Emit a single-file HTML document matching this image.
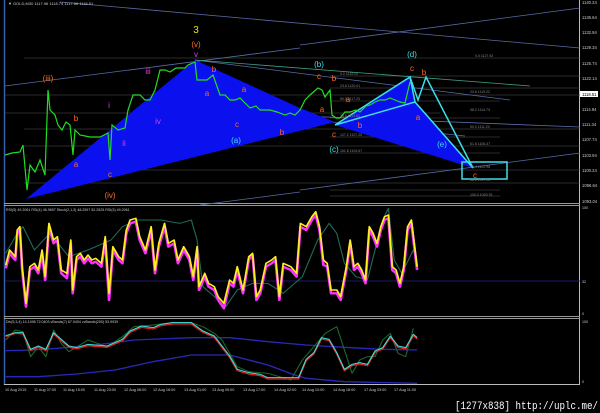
<!DOCTYPE html>
<html><head><meta charset="utf-8"><style>
html,body{margin:0;padding:0;background:#000;width:600px;height:413px;overflow:hidden}
svg{display:block;font-family:"Liberation Sans",sans-serif}
</style></head><body>
<svg width="600" height="413" viewBox="0 0 600 413" xmlns="http://www.w3.org/2000/svg">
<rect width="600" height="413" fill="#000"/>
<line x1="4.5" y1="0" x2="4.5" y2="385" stroke="#3a5fb0" stroke-width="1.5"/>
<line x1="579.5" y1="0" x2="579.5" y2="385" stroke="#bbb" stroke-width="1"/>
<line x1="4" y1="203.5" x2="580" y2="203.5" stroke="#999"/>
<line x1="4" y1="205.5" x2="580" y2="205.5" stroke="#999"/>
<line x1="4" y1="316.5" x2="580" y2="316.5" stroke="#999"/>
<line x1="4" y1="318.5" x2="580" y2="318.5" stroke="#999"/>
<line x1="4" y1="384.5" x2="580" y2="384.5" stroke="#bbb"/>
<g stroke="#555" stroke-width="0.6">
<line x1="24" y1="58" x2="580" y2="58"/>
<line x1="5" y1="95" x2="580" y2="95"/>
<line x1="5" y1="113" x2="440" y2="113"/>
<line x1="24" y1="129" x2="580" y2="129"/>
<line x1="24" y1="146" x2="580" y2="146"/>
<line x1="24" y1="170" x2="580" y2="170"/>
<line x1="24" y1="183" x2="580" y2="183"/>
<line x1="330" y1="76" x2="580" y2="76"/>
<line x1="330" y1="88" x2="580" y2="88"/>
<line x1="330" y1="101" x2="500" y2="101"/>
<line x1="330" y1="118" x2="500" y2="118"/>
<line x1="330" y1="137" x2="500" y2="137"/>
<line x1="330" y1="153" x2="500" y2="153"/>
<line x1="330" y1="190" x2="500" y2="190"/>
<line x1="330" y1="196" x2="500" y2="196"/>
</g>
<g stroke="#5a6aa8" stroke-width="0.8" fill="none">
<line x1="60" y1="2" x2="580" y2="48"/>
<line x1="300" y1="45" x2="580" y2="8"/>
<line x1="5" y1="86" x2="300" y2="48"/>
<line x1="195" y1="60" x2="510" y2="100"/>
<line x1="330" y1="122" x2="465" y2="136"/>
<line x1="300" y1="190" x2="580" y2="153"/>
<line x1="200" y1="205" x2="300" y2="192"/>
<line x1="148" y1="110" x2="580" y2="127"/>
</g>
<line x1="195" y1="60" x2="530" y2="86" stroke="#3f9f8a" stroke-width="0.8"/>
<polygon points="26,199 195,60 300,108 335,122" fill="#0a10ee"/>
<polygon points="300,112 335,122 26,199" fill="#0a10ee"/>
<polygon points="335,125 410,77 415,102 473,168" fill="#0a10ee"/>
<g stroke="#3ee0e8" stroke-width="1.5" fill="none">
<polyline points="335,125 410,77 415,102 335,125"/>
<polyline points="415,102 473,168 426,77 418,100 410,77"/>
<rect x="462" y="162" width="45" height="17"/>
</g>
<polyline fill="none" stroke="#22dd22" stroke-width="1.2" points="5,155 12,153 20,152 23,145 27,190 30,165 35,172 40,160 45,175 48,90 50,110 55,115 58,125 62,130 66,122 70,125 73,155 75,130 80,135 90,137 100,137 108,133 110,160 112,125 118,130 125,128 128,110 133,95 140,95 145,100 150,100 155,90 160,70 165,70 170,72 176,68 180,68 185,68 188,65 195,62 197,80 200,80 207,80 213,75 220,95 225,95 230,100 235,100 240,98 245,103 250,108 256,106 260,110 270,110 277,112 285,115 290,113 295,115 300,110 305,100 310,95 318,88 322,90 325,97 330,90 332,115 336,118 340,118 345,112 350,112 356,110 360,112 366,106 370,105 375,102 380,100 385,100 390,98 395,100 400,102 405,103 410,82"/>
<g font-size="8" text-anchor="middle">
<text x="196" y="33" fill="#f0e000" font-size="10">3</text>
<text x="196" y="47" fill="#ff6a20">(v)</text>
<text x="196" y="57" fill="#e040e0">v</text>
<text x="48" y="81" fill="#ff6a20">(iii)</text>
<text x="148" y="74" fill="#e040e0">iii</text>
<text x="109" y="108" fill="#e040e0">i</text>
<text x="124" y="146" fill="#e040e0">ii</text>
<text x="158" y="124" fill="#e040e0">iv</text>
<text x="110" y="198" fill="#ff6a20">(iv)</text>
<text x="76" y="121" fill="#ff6a20">b</text>
<text x="76" y="167" fill="#ff6a20">a</text>
<text x="110" y="177" fill="#ff6a20">c</text>
<text x="214" y="72" fill="#ff6a20">b</text>
<text x="207" y="96" fill="#ff6a20">a</text>
<text x="244" y="92" fill="#ff6a20">a</text>
<text x="237" y="127" fill="#ff6a20">c</text>
<text x="282" y="135" fill="#ff6a20">b</text>
<text x="236" y="143" fill="#3ee0e8">(a)</text>
<text x="319" y="67" fill="#3ee0e8">(b)</text>
<text x="319" y="79" fill="#ff6a20">c</text>
<text x="334" y="81" fill="#ff6a20">b</text>
<text x="322" y="112" fill="#ff6a20">a</text>
<text x="348" y="102" fill="#ff6a20">a</text>
<text x="360" y="128" fill="#ff6a20">b</text>
<text x="334" y="137" fill="#ff6a20">c</text>
<text x="334" y="152" fill="#3ee0e8">(c)</text>
<text x="412" y="57" fill="#3ee0e8">(d)</text>
<text x="412" y="71" fill="#ff6a20">c</text>
<text x="424" y="75" fill="#ff6a20">b</text>
<text x="418" y="120" fill="#ff6a20">a</text>
<text x="442" y="147" fill="#3ee0e8">(e)</text>
<text x="475" y="178" fill="#ff6a20">c</text>
</g>
<g font-size="3.5" fill="#888">
<text x="475" y="57">0.0 1127.92</text>
<text x="340" y="75">0.0 1122.02</text>
<text x="470" y="93">23.6 1119.22</text>
<text x="470" y="111">38.2 1114.73</text>
<text x="470" y="128">50.0 1111.20</text>
<text x="470" y="145">61.8 1106.47</text>
<text x="470" y="168">76.4 1102.98</text>
<text x="470" y="181">88.6 1097.55</text>
<text x="470" y="196">100.0 1093.76</text>
<text x="340" y="87">23.6 1120.01</text>
<text x="340" y="100">50.0 1117.23</text>
<text x="340" y="117">78.6 1113.61</text>
<text x="340" y="136">127.2 1107.25</text>
<text x="340" y="152">161.8 1104.67</text>
</g>
<g font-size="4.2" fill="#ccc">
<text x="582" y="4">1140.24</text>
<text x="582" y="19">1136.64</text>
<text x="582" y="34">1132.94</text>
<text x="582" y="49">1129.34</text>
<text x="582" y="65">1125.74</text>
<text x="582" y="80">1122.14</text>
<text x="582" y="111">1114.94</text>
<text x="582" y="126">1111.34</text>
<text x="582" y="141">1107.74</text>
<text x="582" y="157">1103.94</text>
<text x="582" y="172">1100.24</text>
<text x="582" y="187">1096.64</text>
<text x="582" y="203">1093.04</text>
</g>
<rect x="580" y="91" width="18" height="6" fill="#fff"/>
<text x="582" y="96" font-size="4.2" fill="#000">1118.51</text>
<text x="8" y="5" font-size="4" fill="#ccc">▼ GOLD,M30 1117.96 1118.74 1117.56 1118.51</text>
<text x="6" y="211" font-size="3.6" fill="#ccc">RSI(5) 49.2061 RSI(4) 46.9697 Stoch(2,1,3) 48.2597 52.2525 RSI(5) 49.2061</text>
<line x1="5" y1="281" x2="580" y2="281" stroke="#22228a" stroke-width="0.8"/>
<text x="582" y="209" font-size="3.6" fill="#ccc">100</text>
<text x="582" y="283" font-size="3.6" fill="#ccc">32</text>
<text x="582" y="315" font-size="3.6" fill="#ccc">0</text>
<g transform="translate(0,200) scale(0.3827,0.33333)" fill="none" stroke-linejoin="round">
<polyline stroke="#1f6a5a" stroke-width="3" points="15,160 40,110 60,80 90,150 130,100 180,170 230,150 290,120 320,80 360,60 420,60 470,70 500,60 515,120 530,260 560,290 590,320 620,270 660,250 700,250 740,280 790,230 830,120 860,70 880,100 900,190 930,230 960,240 1000,60 1015,25 1030,180 1050,220 1080,150"/>
<polyline stroke="#ff30ff" stroke-width="7" points="15,205 25,160 40,180 45,100 52,90 58,210 68,320 78,210 90,200 100,220 110,160 118,240 128,80 140,130 150,120 160,220 175,235 185,130 190,280 200,180 210,170 220,190 230,175 240,190 250,185 265,200 275,120 285,300 295,150 310,180 320,190 330,100 340,70 355,65 365,120 380,160 395,90 405,220 415,140 430,80 440,140 455,130 465,190 480,150 495,180 505,240 515,150 520,270 535,230 545,260 560,270 570,300 585,325 600,250 610,260 620,210 635,280 650,180 660,165 670,300 680,280 695,200 710,190 720,180 730,300 740,200 760,210 775,230 785,80 800,90 815,60 825,45 835,90 845,195 855,200 865,280 880,280 890,300 905,210 915,130 925,210 935,200 945,220 955,250 965,90 975,110 985,140 995,90 1005,60 1015,55 1025,210 1035,220 1045,260 1055,210 1065,90 1075,70 1090,210"/>
<polyline stroke="#ffef20" stroke-width="4.5" points="15,195 25,150 40,170 45,90 52,80 58,200 68,310 78,200 90,190 100,210 110,150 118,230 128,70 140,120 150,110 160,210 175,220 185,120 190,270 200,170 210,160 220,180 230,165 240,180 250,175 265,190 275,110 285,280 295,140 310,170 320,180 330,90 340,60 355,55 365,110 380,150 395,80 405,210 415,130 430,70 440,130 455,120 465,180 480,140 495,170 505,230 515,140 520,260 535,220 545,250 560,260 570,290 585,310 600,240 610,250 620,200 635,270 650,170 660,160 670,290 680,270 695,190 710,180 720,170 730,290 740,190 760,200 775,220 785,70 800,80 815,50 825,35 835,80 845,180 855,190 865,270 880,270 890,290 905,200 915,120 925,200 935,190 945,210 955,240 965,80 975,100 985,130 995,80 1005,50 1015,45 1025,200 1035,210 1045,250 1055,200 1065,80 1075,60 1090,200"/>
<polyline stroke="#2828b8" stroke-width="4" points="15,452 80,450 150,445 250,435 350,420 500,413 600,413 700,425 800,435 900,442 1000,448 1090,450"/>
<polyline stroke="#2828b8" stroke-width="4" points="15,530 100,530 200,522 300,510 400,485 500,465 600,465 700,495 770,525 800,535 900,545 1090,550"/>
<polyline stroke="#1a6a2a" stroke-width="3" points="15,420 40,390 60,395 80,470 100,440 120,470 140,390 160,430 180,455 230,420 280,440 320,410 350,380 400,375 450,368 500,368 530,380 560,400 580,420 600,460 620,500 650,515 700,520 760,540 790,480 820,440 850,400 880,380 900,450 920,520 940,480 960,470 980,470 1000,420 1020,400 1040,460 1060,470 1080,385"/>
<polyline stroke="#e02020" stroke-width="4" points="15,410 40,400 60,402 80,452 100,442 120,452 140,402 160,422 180,442 200,447 230,437 280,442 300,432 320,422 340,397 370,382 400,387 420,377 450,372 500,372 530,397 560,412 580,442 600,472 620,512 650,522 680,527 700,537 730,537 760,537 780,537 800,482 820,462 840,417 860,422 880,462 900,512 920,497 940,492 960,497 980,457 1000,447 1020,412 1040,442 1060,447 1080,407 1090,417"/>
<polyline stroke="#40e0e0" stroke-width="3" points="15,407 40,398 60,398 80,448 100,438 120,448 140,398 160,418 180,438 200,443 230,433 280,438 300,428 320,418 340,393 370,378 400,383 420,373 450,368 500,368 530,393 560,408 580,438 600,468 620,508 650,518 680,523 700,533 730,533 760,533 780,533 800,478 820,458 840,413 860,418 880,458 900,508 920,493 940,488 960,493 980,453 1000,443 1020,408 1040,438 1060,443 1080,403 1090,413"/>
</g>
<text x="6" y="323" font-size="3.6" fill="#ccc">Div(5,3,4) 14.1498 72.0403 vBands(7) 67.0404 vvBands(200) 53.9939</text>
<text x="582" y="323" font-size="3.6" fill="#ccc">100</text>
<text x="582" y="383" font-size="3.6" fill="#ccc">0</text>
<g font-size="3.8" fill="#ccc">
<text x="5" y="391">10 Aug 2015</text>
<text x="34" y="391">11 Aug 07:00</text>
<text x="63" y="391">11 Aug 15:00</text>
<text x="94" y="391">11 Aug 23:00</text>
<text x="124" y="391">12 Aug 08:00</text>
<text x="153" y="391">12 Aug 16:00</text>
<text x="184" y="391">13 Aug 01:00</text>
<text x="212" y="391">13 Aug 09:00</text>
<text x="243" y="391">13 Aug 17:00</text>
<text x="274" y="391">14 Aug 02:00</text>
<text x="302" y="391">14 Aug 10:00</text>
<text x="333" y="391">14 Aug 18:00</text>
<text x="364" y="391">17 Aug 03:00</text>
<text x="394" y="391">17 Aug 11:00</text>
</g>
<text x="455" y="409" font-size="11" fill="#fff" font-family="Liberation Mono, monospace" textLength="143" lengthAdjust="spacingAndGlyphs">[1277x838] http://uplc.me/</text>
</svg>
</body></html>
